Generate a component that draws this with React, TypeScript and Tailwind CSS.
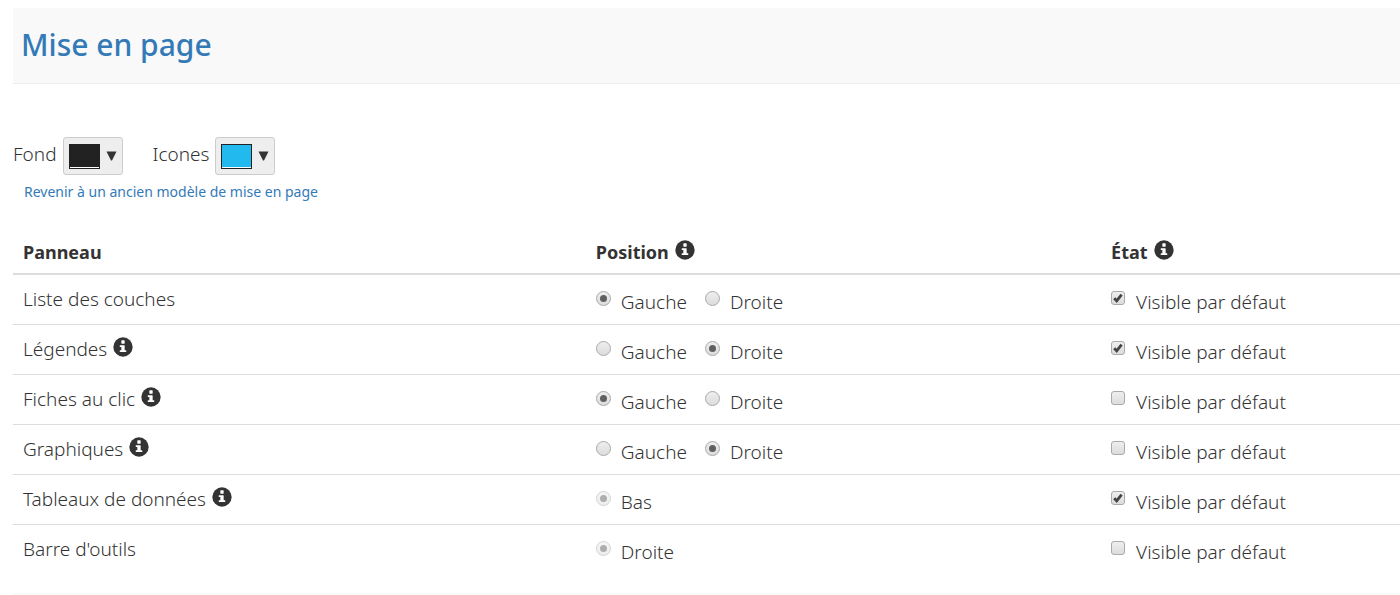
import { useState } from "react";

type Panel = {
  id: string;
  label: string;
  info: boolean;
  positions: string[];
  position: string;
  visible: boolean;
};

const initialPanels: Panel[] = [
  { id: "couches", label: "Liste des couches", info: false, positions: ["Gauche", "Droite"], position: "Gauche", visible: true },
  { id: "legendes", label: "Légendes", info: true, positions: ["Gauche", "Droite"], position: "Droite", visible: true },
  { id: "fiches", label: "Fiches au clic", info: true, positions: ["Gauche", "Droite"], position: "Gauche", visible: false },
  { id: "graphiques", label: "Graphiques", info: true, positions: ["Gauche", "Droite"], position: "Droite", visible: false },
  { id: "tableaux", label: "Tableaux de données", info: true, positions: ["Bas"], position: "Bas", visible: true },
  { id: "outils", label: "Barre d'outils", info: false, positions: ["Droite"], position: "Droite", visible: false },
];

function InfoIcon() {
  return (
    <svg viewBox="0 0 1200 1200" className="mb-1 size-5 shrink-0" aria-hidden="true">
      <circle cx="600" cy="600" r="580" fill="#333" />
      <path
        fill="#fff"
        d="M525 200h150q25 0 25 25v150q0 25-25 25h-150q-25 0-25-25v-150q0-25 25-25zM425 500h250q25 0 25 25v275h75q25 0 25 25v50q0 25-25 25h-350q-25 0-25-25v-50q0-25 25-25h75v-200h-75q-25 0-25-25v-50q0-25 25-25z"
      />
    </svg>
  );
}

function ColorButton({ label, swatch }: { label: string; swatch: string }) {
  return (
    <div className="flex items-center gap-1.5">
      <span className="pb-1">{label}</span>
      <button
        type="button"
        aria-label={label}
        className="flex h-[38px] items-center gap-1.5 rounded-[3px] border border-[#ccc] bg-[#eee] px-[5px]"
      >
        <span className="h-[25px] w-[31px] border border-[#222] bg-white pb-px">
          <span className={`block h-full ${swatch}`} />
        </span>
        <svg viewBox="0 0 11 10" className="h-2.5 w-[11px]" aria-hidden="true">
          <path d="M0.5 0.5h10l-4.5 9h-1z" fill="#333" />
        </svg>
      </button>
    </div>
  );
}

export default function App() {
  const [panels, setPanels] = useState(initialPanels);

  const update = (id: string, values: Partial<Panel>) =>
    setPanels(panels.map((p) => (p.id === id ? { ...p, ...values } : p)));

  return (
    <main className="bg-white pt-2 pl-[13px] font-['Noto_Sans','Open_Sans',sans-serif] text-[19px] leading-7 font-light text-[#333]">
      <header className="border-b border-[#eee] bg-[#f9f9f9] px-2 pt-4 pb-[18px]">
        <h1 className="text-3xl leading-[41px] font-medium text-[#337ab7]">Mise en page</h1>
      </header>

      <div className="mt-[53px] flex gap-[30px]">
        <ColorButton label="Fond" swatch="bg-[#222]" />
        <ColorButton label="Icones" swatch="bg-[#22b9ee]" />
      </div>
      <a href="#modele" className="ml-[11px] block w-fit pt-1.5 text-sm leading-[22px] font-normal text-[#337ab7]">
        Revenir à un ancien modèle de mise en page
      </a>

      <table className="mt-[27px] w-full table-fixed border-collapse text-left">
        <thead>
          <tr className="h-11 border-b-2 border-[#ddd] text-lg font-bold">
            <th className="w-[41.3%] px-2.5">Panneau</th>
            <th className="w-[37.15%] px-2.5">
              <span className="flex items-center gap-1.5">
                Position <InfoIcon />
              </span>
            </th>
            <th className="px-2.5">
              <span className="flex items-center gap-1.5">
                État <InfoIcon />
              </span>
            </th>
          </tr>
        </thead>
        <tbody>
          {panels.map((panel) => (
            <tr key={panel.id} className="h-[50px] border-b border-[#ddd] last:border-b-0">
              <td className="px-2.5">
                <span className="flex items-center gap-1.5">
                  {panel.label} {panel.info && <InfoIcon />}
                </span>
              </td>
              <td className="px-2.5">
                <div className="flex gap-[18px]">
                  {panel.positions.map((position) => (
                    <label key={position} className="flex items-center gap-2.5">
                      <input
                        type="radio"
                        name={panel.id}
                        checked={panel.position === position}
                        disabled={panel.positions.length === 1}
                        onChange={() => update(panel.id, { position })}
                        className="mb-px grid size-[15px] appearance-none place-items-center rounded-full border border-[#aaa] bg-linear-to-b from-[#eee] to-[#dcdcdc] before:size-[7px] before:rounded-full checked:before:bg-[#606060] disabled:opacity-50"
                      />
                      <span className="pt-[5px]">{position}</span>
                    </label>
                  ))}
                </div>
              </td>
              <td className="px-2.5">
                <label className="flex items-center gap-[11px]">
                  <span className="mb-0.5 grid size-3.5 place-items-center">
                    <input
                      type="checkbox"
                      checked={panel.visible}
                      onChange={() => update(panel.id, { visible: !panel.visible })}
                      className="peer col-start-1 row-start-1 size-3.5 appearance-none rounded-[3px] border border-[#aaa] bg-linear-to-b from-[#eee] to-[#dcdcdc]"
                    />
                    <svg
                      viewBox="0 0 14 14"
                      className="pointer-events-none invisible col-start-1 row-start-1 size-3.5 peer-checked:visible"
                      aria-hidden="true"
                    >
                      <path d="M3.2 7.2l2.5 2.6 4.9-6.2" fill="none" stroke="#444" strokeWidth="2.8" />
                    </svg>
                  </span>
                  <span className="pt-[5px]">Visible par défaut</span>
                </label>
              </td>
            </tr>
          ))}
        </tbody>
      </table>

      <footer className="mt-[19px] h-0.5 bg-[#f9f9f9]" />
    </main>
  );
}
